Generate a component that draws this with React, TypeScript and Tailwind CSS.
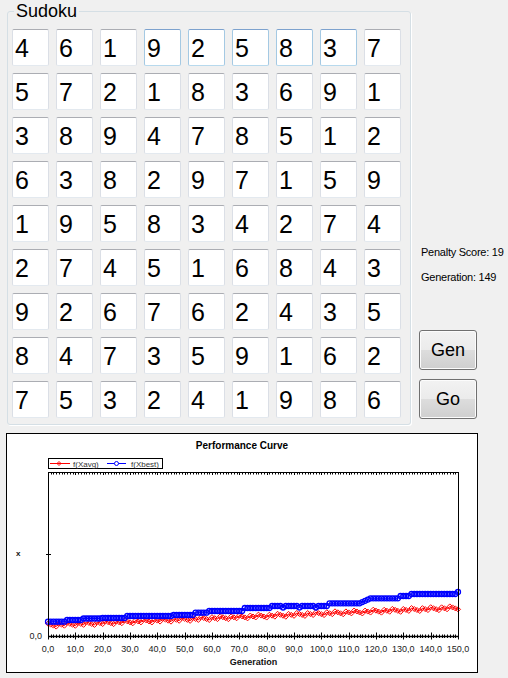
const board = [
  [4, 6, 1, 9, 2, 5, 8, 3, 7],
  [5, 7, 2, 1, 8, 3, 6, 9, 1],
  [3, 8, 9, 4, 7, 8, 5, 1, 2],
  [6, 3, 8, 2, 9, 7, 1, 5, 9],
  [1, 9, 5, 8, 3, 4, 2, 7, 4],
  [2, 7, 4, 5, 1, 6, 8, 4, 3],
  [9, 2, 6, 7, 6, 2, 4, 3, 5],
  [8, 4, 7, 3, 5, 9, 1, 6, 2],
  [7, 5, 3, 2, 4, 1, 9, 8, 6],
]

// plot box in svg coords (svg origin sits at page 7,451)
const X0 = 41
const X1 = 451
const YT = 20
const YB = 184
const gx = (g: number) => X0 + (g * (X1 - X0)) / 150

const blueSteps: [number, number][] = [
  [0, 620.7], [7, 619], [13, 617.5], [20, 617], [29, 615], [46, 614], [54, 611.7],
  [59, 610], [72, 607], [82, 605], [103, 602.3], [118, 597.3], [129, 595], [133, 593],
]

function blueAt(g: number) {
  if (g === 150) return 591
  if (g >= 114 && g < 118) return 602.3 - ((g - 114) / 4) * 5
  let y = blueSteps[0][1]
  for (const [s, v] of blueSteps) if (g >= s) y = v
  if (g >= 82 && g < 103 && g % 6 === 2) y += 1.5
  return y
}

function redAt(g: number) {
  const noise = (((g * 37) % 7) - 3) * 0.55
  return 624.3 - (17.6 * g) / 150 + noise
}

const gens = Array.from({ length: 151 }, (_, i) => i)
const blue = gens.map((g) => [gx(g), blueAt(g) - 451])
const red = gens.map((g) => [gx(g), redAt(g) - 451])

function Cell({ v, hot }: { v: number; hot: boolean }) {
  return (
    <div
      className={
        hot
          ? 'h-[37px] w-[37px] rounded-[2px] border border-t-[#7da2ce] border-x-[#a4c9e3] border-b-[#b7d9ed] bg-white pl-[2px] pt-[4px] text-[25px] leading-[28px]'
          : 'h-[37px] w-[37px] rounded-[2px] border border-t-[#abadb3] border-x-[#dbdfe6] border-b-[#e3e9ef] bg-white pl-[2px] pt-[4px] text-[25px] leading-[28px]'
      }
    >
      {v}
    </div>
  )
}

function Chart() {
  return (
    <svg width={470} height={220} className="block">
      {/* legend */}
      <rect x={41.5} y={6.5} width={114} height={10} fill="white" stroke="black" />
      <line x1={43} y1={11.5} x2={63} y2={11.5} stroke="#ff0000" />
      <path d="M52 9.5 L54 11.5 L52 13.5 L50 11.5 Z" fill="none" stroke="#ff0000" />
      <text x={66} y={14.5} fontSize={8} fill="#333">f(Xavg)</text>
      <line x1={100} y1={11.5} x2={119} y2={11.5} stroke="#0000ff" />
      <circle cx={109.5} cy={11.5} r={2} fill="white" stroke="#0000ff" />
      <text x={124} y={14.5} fontSize={8} fill="#333">f(Xbest)</text>

      {/* series */}
      <polyline points={red.map((p) => p.join(',')).join(' ')} fill="none" stroke="#ff0000" strokeWidth={1} />
      {red.map(([x, y], i) => (
        <path key={'r' + i} d={`M${x} ${y - 2.5} L${x + 2.5} ${y} L${x} ${y + 2.5} L${x - 2.5} ${y} Z`} fill="none" stroke="#ff0000" strokeWidth={1} />
      ))}
      <polyline points={blue.map((p) => p.join(',')).join(' ')} fill="none" stroke="#0000ff" strokeWidth={1} />
      {blue.map(([x, y], i) => (
        <circle key={'b' + i} cx={x} cy={y} r={2.5} fill="none" stroke="#0000ff" strokeWidth={1.3} />
      ))}

      {/* plot frame */}
      <rect x={X0 + 0.5} y={YT + 0.5} width={X1 - X0} height={YB - YT} fill="none" stroke="black" />
      <line x1={X0 + 0.5} y1={YB + 0.5} x2={X1 + 0.5} y2={YB + 0.5} stroke="black" strokeWidth={1.5} />
      {gens.map((g) => (
        <line key={'t' + g} x1={Math.round(gx(g)) + 0.5} y1={YT} x2={Math.round(gx(g)) + 0.5} y2={YT + (g % 10 === 0 ? 3 : 2.5)} stroke="black" />
      ))}
      {gens.map((g) => (
        <line
          key={'b' + g}
          x1={Math.round(gx(g)) + 0.5}
          y1={g % 10 === 0 ? 180.5 : 182.5}
          x2={Math.round(gx(g)) + 0.5}
          y2={g % 10 === 0 ? 187.5 : 186}
          stroke="black"
        />
      ))}
      <line x1={39} y1={102.5} x2={44} y2={102.5} stroke="black" />

      {/* labels */}
      <text x={9} y={104} fontSize={8} fontWeight="bold" fill="#111">x</text>
      <text x={35} y={187} fontSize={9} textAnchor="end" fill="#222">0,0</text>
      {Array.from({ length: 16 }, (_, i) => (
        <text key={'l' + i} x={gx(i * 10)} y={200} fontSize={9} textAnchor="middle" fill="#222">
          {i * 10},0
        </text>
      ))}
      <text x={246.5} y={213} fontSize={9} fontWeight="bold" textAnchor="middle" fill="#111">Generation</text>
    </svg>
  )
}

export default function App() {
  return (
    <div className="h-[678px] w-[508px] overflow-hidden bg-[#f0f0f0] font-['Liberation_Sans',Arial,sans-serif] text-black">
      <div className="flex items-start pl-[7px] pt-[1px]">
        <fieldset className="w-[404px] rounded-[3px] border border-[#d5dfe5] pb-[6px] pl-[4px] pr-[9px] pt-[8px] shadow-[1px_1px_0_#fff]">
          <legend className="ml-[2px] px-[2px] text-[18px] leading-[20px]">Sudoku</legend>
          <div className="grid grid-cols-[repeat(9,37px)] gap-[7px]">
            {board.map((row, r) =>
              row.map((v, c) => <Cell key={r * 9 + c} v={v} hot={r === 0 && c >= 3 && c <= 7} />)
            )}
          </div>
        </fieldset>

        <div className="ml-[8px] flex flex-col items-start pt-[245px] text-[11px] leading-[13px] tracking-[-0.25px]">
          <div className="pl-[2px] whitespace-nowrap">Penalty Score: 19</div>
          <div className="mt-[12px] pl-[2px] whitespace-nowrap">Generation: 149</div>
          <button className="mt-[46px] h-[40px] w-[58px] rounded-[3px] border border-[#707070] bg-[linear-gradient(#f2f2f2,#ebebeb_50%,#dddddd_50%,#cfcfcf)] text-[18px] leading-[20px] tracking-normal shadow-[inset_0_0_0_1px_#fcfcfc]">
            Gen
          </button>
          <button className="mt-[9px] h-[40px] w-[58px] rounded-[3px] border border-[#707070] bg-[linear-gradient(#f2f2f2,#ebebeb_50%,#dddddd_50%,#cfcfcf)] text-[18px] leading-[20px] tracking-normal shadow-[inset_0_0_0_1px_#fcfcfc]">
            Go
          </button>
        </div>
      </div>

      <div className="ml-[6px] mt-[8px] flex h-[240px] w-[472px] flex-col border border-black bg-white">
        <div className="pt-[6px] text-center text-[10px] font-bold leading-[12px]">Performance Curve</div>
        <Chart />
      </div>
    </div>
  )
}
